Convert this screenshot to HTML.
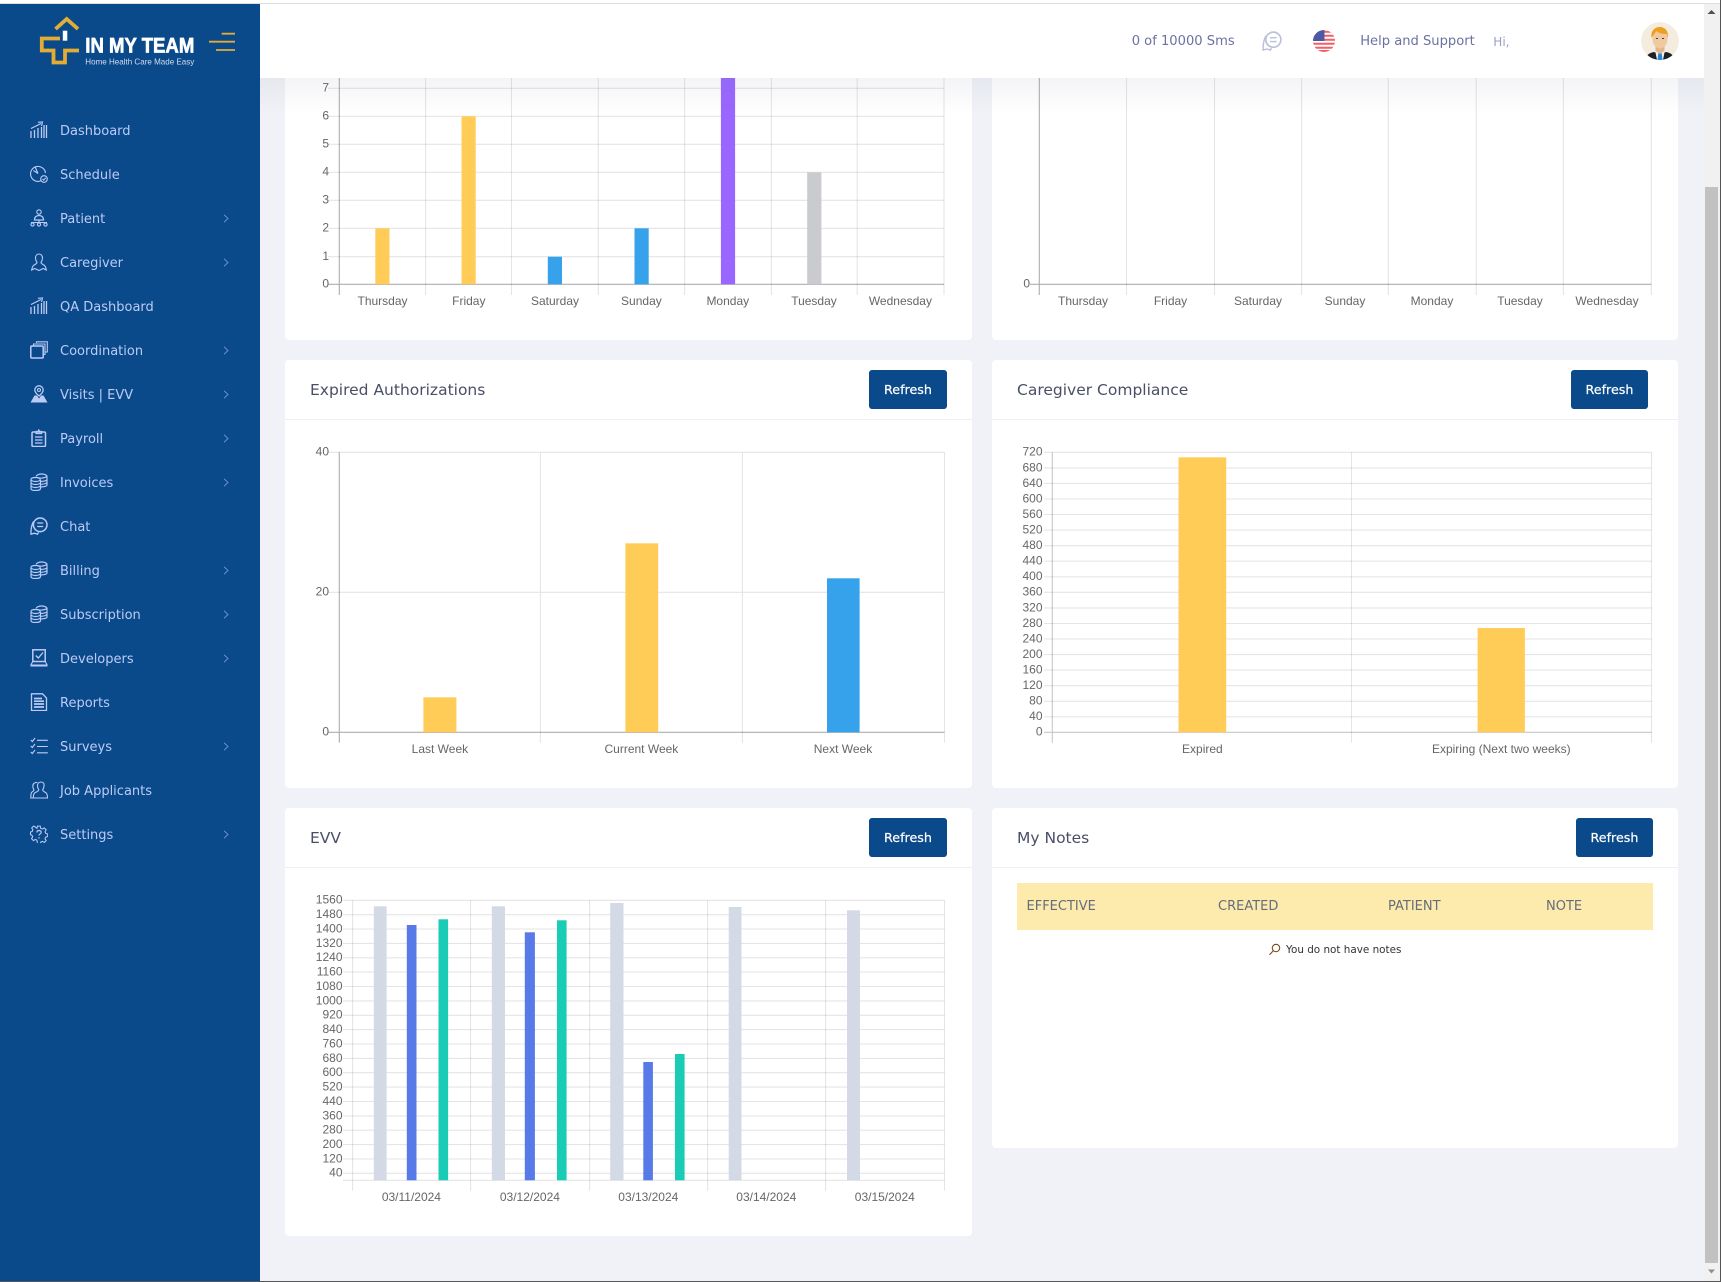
<!DOCTYPE html>
<html lang="en">
<head>
<meta charset="utf-8">
<title>In My Team</title>
<style>
html,body{margin:0;padding:0;width:1721px;height:1282px;overflow:hidden;background:#f0f2f7;font-family:"DejaVu Sans","Liberation Sans",sans-serif}
*{box-sizing:border-box}
.abs{position:absolute}
#top{left:0;top:0;width:1721px;height:4px;background:#fff;border-bottom:1px solid #dedede;z-index:9}
.card{position:absolute;background:#fff;border-radius:4px}
.card .hd{position:absolute;left:0;right:0;top:0;height:60px;border-bottom:1.5px solid #eef0f4}
.card h4{position:absolute;left:25px;top:20px;margin:0;font-size:15.5px;line-height:20px;font-weight:400;color:#4a4f68;white-space:nowrap}
.btn{position:absolute;top:10px;width:78px;height:39px;background:#0a4a8a;color:#fff;border-radius:3px;font-size:12.7px;line-height:39px;text-align:center;-webkit-text-stroke:.2px #fff}
#side{left:0;top:4px;width:260px;height:1277px;background:#0a4a8a;z-index:5}
#menu{position:absolute;left:0;top:104px;margin:0;padding:0;list-style:none;width:260px}
#menu li{position:relative;height:44px;line-height:48px;padding-left:60px;font-size:13px;color:#bccbf6;white-space:nowrap}
#menu li svg.ic{position:absolute;left:30px;top:13px;width:18px;height:18px;fill:none;stroke:#bccbf6;stroke-width:1.1}
#menu li svg.ch{position:absolute;left:223px;top:18px;width:6px;height:9px;fill:none;stroke:#6b8ccb;stroke-width:1}
#head{left:260px;top:4px;width:1444px;height:74px;background:#fff;z-index:4}
#head span{position:absolute;white-space:nowrap;font-size:13.1px;line-height:20px;top:28px;color:#6b72a3}
#fade{left:260px;top:78px;width:1444px;height:36px;background:linear-gradient(rgba(120,125,150,.085),rgba(120,125,150,0));z-index:3}
#bar{left:1704px;top:4px;width:16px;height:1277px;background:#f1f1f1;z-index:6}
#thumb{left:1705px;top:187px;width:13px;height:1076px;background:#c1c1c1;z-index:7}
#thead{position:absolute;left:25px;top:75px;width:636px;height:47px;background:#fdebae;color:#666c7a;font-size:13px;line-height:47px}
#thead span{position:absolute;top:0}
#msg{position:absolute;left:294px;top:135px;font-size:10.4px;line-height:14px;color:#333;white-space:nowrap}
svg text{font-family:"Liberation Sans",Arial,sans-serif;font-size:12px;fill:#666}
</style>
</head>
<body>
<svg width="0" height="0" style="position:absolute">
<defs>
<symbol id="i-dash" viewBox="0 0 18 18"><path d="M1 17V10M4.500 17V9M8 17V7M11.500 17V6M16.500 17V4M14 17V4" stroke-width="1.300"/><path d="M1 7.500L11 2.500M8 1.300L12.500 1 11.500 5"/></symbol>
<symbol id="i-sched" viewBox="0 0 18 18"><path d="M11 15.800A7.500 7.500 0 1 1 15.500 8M8 8.500L5 1.600M3.500 5.500L8 8.500"/><circle cx="14" cy="14" r="3.300"/><path d="M12.500 14l1.200 1.200 2-2.400"/></symbol>
<symbol id="i-patient" viewBox="0 0 18 18"><circle cx="9" cy="3" r="2.200"/><path d="M4.500 11c0-3 2-4.500 4.500-4.500s4.500 1.500 4.500 4.500z" stroke-width="1.300"/><path d="M1 13.500h16M9 11v2.500"/><circle cx="2.500" cy="15.500" r="1.600"/><circle cx="9" cy="15.500" r="1.600"/><circle cx="15.500" cy="15.500" r="1.600"/></symbol>
<symbol id="i-care" viewBox="0 0 18 18"><path d="M9 1C6.800 1 5.500 2.800 5.500 5c0 2 .8 3.500 1.500 4.500 0 1.300-2 1.700-3.500 3C2.500 13.500 2 15 1.700 17l3-1.500 4.300 2 4.300-2 3 1.500c-.3-2-.8-3.500-1.800-4.500-1.500-1.300-3.500-1.700-3.500-3 .7-1 1.500-2.500 1.500-4.500C12.500 2.800 11.200 1 9 1z"/></symbol>
<symbol id="i-coord" viewBox="0 0 18 18"><rect x=".8" y="5" width="12.400" height="12" rx="1" stroke-width="1.500"/><path d="M3.500 5V3h11.500v10.500h-1.800M6.500 2V.8H17.300V11h-2"/></symbol>
<symbol id="i-visits" viewBox="0 0 18 18"><path d="M9 .8a4.200 4.200 0 0 0-4.200 4.200c0 2.500 4.200 6 4.200 6s4.200-3.500 4.200-6A4.200 4.200 0 0 0 9 .8z" stroke-width="1.300"/><circle cx="9" cy="5" r="1.500"/><path d="M4.500 10.500L.5 17.500h17l-4-7-2.500 0L9 13.500 7 10.500z" fill="#bccbf6" stroke="none"/></symbol>
<symbol id="i-pay" viewBox="0 0 18 18"><rect x="2" y="3" width="13.500" height="14.500" rx="1.200" stroke-width="1.500"/><path d="M6 4.500V2.500h2L8.800 1l.8 1.500h2v2zM5 8h7.500M5 11h7.500M5 14h7.500" stroke-width="1.200"/></symbol>
<symbol id="i-coins" viewBox="0 0 18 18"><path d="M1 6.500C1 5 3.500 4.500 5.500 4.500S10 5 10 6.500M1 6.500v9C1 17 3.500 17.500 5.500 17.500s5-.5 5-2V6.500M1 9.500c0 1.300 2.500 2 4.500 2s5-.7 5-2M1 12.500c0 1.300 2.500 2 4.500 2s5-.7 5-2M1 6.500c0 1.300 2.500 2 4.500 2s5-.7 5-2" stroke-width="1.150"/><path d="M6 3.500C6.500 2 9 1 11.500 1S17 2 17 3.500v8.500c0 1.200-3 2-6.500 2M10.500 8.500c3 0 6.500-.7 6.500-2.300M10.500 11.300c3 0 6.500-.7 6.500-2.300M7 4.500c2 .8 7 1 10-1" stroke-width="1.150"/></symbol>
<symbol id="i-chat" viewBox="0 0 18 18"><circle cx="10.200" cy="7.800" r="6.800" stroke-width="1.500"/><path d="M7.200 6h6M7.200 9.500h6" stroke-width="1.200"/><path d="M3.500 4.500C1.800 7.500 .8 12 1 17.200l3.500-1 3 1 1-1.800" stroke-width="1.300"/></symbol>
<symbol id="i-dev" viewBox="0 0 18 18"><rect x="2.800" y=".8" width="12.400" height="11.700" stroke-width="1.500"/><path d="M5.800 6.500L8.300 9 13 3.500" stroke-width="1.300"/><path d="M2.800 12.500L.8 16M15.200 12.500l2 3.500"/><path d="M.5 16.500h17" stroke-width="2"/></symbol>
<symbol id="i-rep" viewBox="0 0 18 18"><path d="M1.500.8H12.500L16.500 5V17.500H1.500z" stroke-width="1.300"/><path d="M4 5.500h8M4 8.200h10M4 11h10M4 14h10" stroke-width="1.700"/></symbol>
<symbol id="i-surv" viewBox="0 0 18 18"><path d="M.8 3l1.500 1.500L5 1M.8 9l1.500 1.500L5 7M.8 15l1.500 1.500L5 13M7 3.300h10.800M7 9.500h10.800M7 15.800h10.800" stroke-width="1.100"/></symbol>
<symbol id="i-job" viewBox="0 0 18 18"><path d="M11 1c-2.200 0-3.500 1.600-3.500 3.800 0 2 .8 3.200 1.300 4 0 1.500-2.500 2-4 3-1 .8-1.500 2.500-1.500 5.200H17.500c0-2.700-.5-4.400-1.500-5.200-1.500-1-3.300-1.500-3.300-3 .5-.8 1.300-2 1.300-4C14.500 2.600 13.200 1 11 1z"/><path d="M7.500 1.500C5 1 2.800 2.800 2.800 5c0 2 .7 3 1.200 4 0 1-1.500 1.500-2.500 2.500C1 12.500.8 14.500.8 17h2.500"/></symbol>
<symbol id="i-set" viewBox="0 0 18 18"><path d="M7.500 1h3l.5 2.300 1.700.8 2-1.200 2 2-1.200 2 .8 1.800 2 .5v2.800l-2 .5-.8 1.700 1.200 2-2 2-2-1.200-1.700.8-.5 1.700h-3L7 15.800l-1.700-.8-2 1.200-2-2 1.200-2-.8-1.700-1.500-.5V7.200l1.700-.5.8-1.800-1.200-2 2-2 2 1.200L7 3.300z" transform="translate(.3 .2) scale(.95)"/><path d="M6.800 7.500C7 6 8 5.500 9 5.500s2.300.7 2.200 2c-.1 1.200-2.200 1.500-2.200 3M9 12.300v1.200" stroke-width="1.200"/></symbol>
<clipPath id="flagclip"><circle cx="1324" cy="41" r="11"/></clipPath>
<clipPath id="avclip"><ellipse cx="1660" cy="41" rx="19" ry="19"/></clipPath>
</defs>
</svg>

<div id="top" class="abs"></div>

<!-- cards -->
<div class="card" style="left:285px;top:40px;width:687px;height:300px"></div>
<div class="card" style="left:992px;top:40px;width:686px;height:300px"></div>
<div class="card" style="left:285px;top:360px;width:687px;height:428px"><div class="hd"></div><h4>Expired Authorizations</h4><div class="btn" style="left:584px">Refresh</div></div>
<div class="card" style="left:992px;top:360px;width:686px;height:428px"><div class="hd"></div><h4>Caregiver Compliance</h4><div class="btn" style="left:579px;width:77px">Refresh</div></div>
<div class="card" style="left:285px;top:808px;width:687px;height:428px"><div class="hd"></div><h4>EVV</h4><div class="btn" style="left:584px">Refresh</div></div>
<div class="card" style="left:992px;top:808px;width:686px;height:340px"><div class="hd"></div><h4>My Notes</h4><div class="btn" style="left:584px;width:77px">Refresh</div>
  <div id="thead"><span style="left:9.500px">EFFECTIVE</span><span style="left:201px">CREATED</span><span style="left:371px">PATIENT</span><span style="left:529px">NOTE</span></div>
  <div id="msg">You do not have notes</div>
  <svg class="abs" style="left:276px;top:135px" width="14" height="13" viewBox="0 0 14 13" fill="none" stroke="#7a4a20" stroke-width="1.100"><circle cx="8" cy="5" r="3.700"/><path d="M5.300 7.800L1.500 11.800"/></svg>
</div>

<!-- charts -->
<svg class="abs" style="left:0;top:0;z-index:2" width="1721" height="1282" viewBox="0 0 1721 1282">
 <g fill="none" stroke="#000" stroke-opacity=".1" stroke-width="1.100">
  <path d="M328 88.300H944M328 116.300H944M328 144.300H944M328 172.300H944M328 200.300H944M328 228.300H944M328 256.700H944"/>
  <path d="M425.600 78V295M511.500 78V295M598.300 78V295M684.600 78V295M771.400 78V295M857.200 78V295M944 78V295"/>
  <path d="M1126.500 78V295M1214.500 78V295M1301.600 78V295M1388.300 78V295M1476.200 78V295M1563.400 78V295M1651.300 78V295"/>
  <path d="M328 452.300H944.500M328 592.300H944.500M540.400 452.300V742.700M742.400 452.300V742.700M944.500 452.300V742.700"/>
  <path d="M1044 452.300H1651.500M1044 467.900H1651.500M1044 483.400H1651.500M1044 499H1651.500M1044 514.500H1651.500M1044 530.100H1651.500M1044 545.700H1651.500M1044 561.200H1651.500M1044 576.800H1651.500M1044 592.300H1651.500M1044 607.900H1651.500M1044 623.500H1651.500M1044 639H1651.500M1044 654.600H1651.500M1044 670.100H1651.500M1044 685.700H1651.500M1044 701.300H1651.500M1044 716.800H1651.500"/>
  <path d="M1351.500 452.300V742.700M1651.500 452.300V742.700"/>
  <path d="M343 900.300H944.500M343 914.700H944.500M343 929H944.500M343 943.400H944.500M343 957.800H944.500M343 972.100H944.500M343 986.500H944.500M343 1000.900H944.500M343 1015.300H944.500M343 1029.600H944.500M343 1044H944.500M343 1058.400H944.500M343 1072.700H944.500M343 1087.100H944.500M343 1101.500H944.500M343 1115.900H944.500M343 1130.200H944.500M343 1144.600H944.500M343 1159H944.500M343 1173.300H944.500M343 1180.300H944.500"/>
  <path d="M470.600 900.300V1190.700M589.600 900.300V1190.700M707.600 900.300V1190.700M825.600 900.300V1190.700M944.500 900.300V1190.700M352.600 900.300V1190.700"/>
 </g>
 <g fill="none" stroke="#000" stroke-opacity=".32" stroke-width="1.100">
  <path d="M339.300 78V295M328 284.300H944"/>
  <path d="M1039.300 78V295M1030 284.300H1651.300"/>
  <path d="M339.300 452.300V742.700M328 732.300H944.500"/>
  <path d="M1052.300 452.300V742.700M1044 732.300H1651.500" stroke-opacity=".22"/>
 </g>
 <!-- bars -->
 <g fill="#ffcc57">
  <rect x="375.300" y="228.300" width="14.200" height="56"/>
  <rect x="461.500" y="116.300" width="14.200" height="168"/>
  <rect x="423.400" y="697.300" width="33" height="35"/>
  <rect x="625.400" y="543.300" width="32.800" height="189"/>
  <rect x="1178.500" y="457.300" width="47.700" height="275"/>
  <rect x="1477.600" y="628" width="47.300" height="104.300"/>
 </g>
 <g fill="#36a2eb">
  <rect x="547.800" y="256.700" width="14.200" height="27.600"/>
  <rect x="634.500" y="228.300" width="14.200" height="56"/>
  <rect x="827" y="578.300" width="32.600" height="154"/>
 </g>
 <rect x="720.900" y="78" width="14.200" height="206.300" fill="#9966ff"/>
 <rect x="807.200" y="172.300" width="14.200" height="112" fill="#c9cbcf"/>
 <g fill="#d3d9e5">
  <rect x="373.800" y="906.300" width="12.800" height="274"/>
  <rect x="491.800" y="906.300" width="13.200" height="274"/>
  <rect x="610.200" y="903" width="13.300" height="277.300"/>
  <rect x="728.700" y="907" width="12.800" height="273.300"/>
  <rect x="847" y="910.300" width="13" height="270"/>
 </g>
 <g fill="#5879e8">
  <rect x="406.800" y="925" width="9.700" height="255.300"/>
  <rect x="524.800" y="932.300" width="10.100" height="248"/>
  <rect x="643.300" y="1062" width="9.600" height="118.300"/>
 </g>
 <g fill="#1acbb5">
  <rect x="438.500" y="919.300" width="9.600" height="261"/>
  <rect x="557" y="920.300" width="9.600" height="260"/>
  <rect x="675" y="1054" width="9.600" height="126.300"/>
 </g>
 <!-- labels -->
 <g text-anchor="end" transform="translate(0 -.8)">
  <text x="329" y="92.500">7</text><text x="329" y="120.500">6</text><text x="329" y="148.500">5</text><text x="329" y="176.500">4</text><text x="329" y="204.500">3</text><text x="329" y="232.500">2</text><text x="329" y="260.900">1</text><text x="329" y="288.500">0</text>
  <text x="1030" y="288.500">0</text>
  <text x="329" y="456.500">40</text><text x="329" y="596.500">20</text><text x="329" y="736.500">0</text>
  <text x="1042.500" y="456.500">720</text><text x="1042.500" y="472.100">680</text><text x="1042.500" y="487.600">640</text><text x="1042.500" y="503.200">600</text><text x="1042.500" y="518.700">560</text><text x="1042.500" y="534.300">520</text><text x="1042.500" y="549.900">480</text><text x="1042.500" y="565.400">440</text><text x="1042.500" y="581">400</text><text x="1042.500" y="596.500">360</text><text x="1042.500" y="612.100">320</text><text x="1042.500" y="627.700">280</text><text x="1042.500" y="643.200">240</text><text x="1042.500" y="658.800">200</text><text x="1042.500" y="674.300">160</text><text x="1042.500" y="689.900">120</text><text x="1042.500" y="705.500">80</text><text x="1042.500" y="721">40</text><text x="1042.500" y="736.500">0</text>
  <text x="342.500" y="904.500">1560</text><text x="342.500" y="918.900">1480</text><text x="342.500" y="933.200">1400</text><text x="342.500" y="947.600">1320</text><text x="342.500" y="962">1240</text><text x="342.500" y="976.300">1160</text><text x="342.500" y="990.700">1080</text><text x="342.500" y="1005.100">1000</text><text x="342.500" y="1019.500">920</text><text x="342.500" y="1033.800">840</text><text x="342.500" y="1048.200">760</text><text x="342.500" y="1062.600">680</text><text x="342.500" y="1076.900">600</text><text x="342.500" y="1091.300">520</text><text x="342.500" y="1105.700">440</text><text x="342.500" y="1120.100">360</text><text x="342.500" y="1134.400">280</text><text x="342.500" y="1148.800">200</text><text x="342.500" y="1163.200">120</text><text x="342.500" y="1177.500">40</text>
 </g>
 <g text-anchor="middle">
  <text x="382.500" y="305">Thursday</text><text x="468.800" y="305">Friday</text><text x="555" y="305">Saturday</text><text x="641.400" y="305">Sunday</text><text x="727.800" y="305">Monday</text><text x="814" y="305">Tuesday</text><text x="900.400" y="305">Wednesday</text>
  <text x="1083" y="305">Thursday</text><text x="1170.500" y="305">Friday</text><text x="1258" y="305">Saturday</text><text x="1345" y="305">Sunday</text><text x="1432" y="305">Monday</text><text x="1520" y="305">Tuesday</text><text x="1607" y="305">Wednesday</text>
  <text x="439.900" y="753">Last Week</text><text x="641.400" y="753">Current Week</text><text x="843" y="753">Next Week</text>
  <text x="1202.400" y="753">Expired</text><text x="1501.300" y="753">Expiring (Next two weeks)</text>
  <text x="411.400" y="1201">03/11/2024</text><text x="529.900" y="1201">03/12/2024</text><text x="648.300" y="1201">03/13/2024</text><text x="766.300" y="1201">03/14/2024</text><text x="884.800" y="1201">03/15/2024</text>
 </g>
</svg>

<div id="fade" class="abs"></div>

<!-- header -->
<div id="head" class="abs">
 <span style="left:871.700px">0 of 10000 Sms</span>
 <span style="left:1100.200px">Help and Support</span>
 <span style="left:1233.300px;color:#9a9fc2;font-size:12px">Hi,</span>
</div>
<svg class="abs" style="left:0;top:0;z-index:4;pointer-events:none" width="1721" height="80" viewBox="0 0 1721 80">
 <g transform="translate(1262 31) scale(1.110)" fill="none" stroke="#bcc0da"><use href="#i-chat" width="18" height="18"/></g>
 <g clip-path="url(#flagclip)">
  <rect x="1313" y="30" width="22" height="22" fill="#fff"/>
  <path d="M1313 31.700h22M1313 35.700h22M1313 39.700h22M1313 43.700h22M1313 47.700h22M1313 51h22" stroke="#f45f63" stroke-width="2"/>
  <rect x="1313" y="30" width="11.500" height="11" fill="#4c5aa6"/>
 </g>
 <g clip-path="url(#avclip)">
  <ellipse cx="1660" cy="41" rx="19" ry="19" fill="#f3ecdf"/>
  <path d="M1646 60c0-5 3-7 8-8l6 2 6-2c5 1 8 3 8 8z" fill="#1f2024"/>
  <path d="M1655 50h10l-2 10h-6z" fill="#f1f1f1"/>
  <path d="M1658.500 52h3l1 8h-5z" fill="#2a86dd"/>
  <path d="M1655.500 46h9v5l-4.500 3-4.500-3z" fill="#e2b588"/>
  <ellipse cx="1660" cy="39" rx="7.500" ry="9.500" fill="#efcaa0"/>
  <path d="M1651.500 38c-1-7 3-11 8-11s9 3 8.500 11l-1.500-4c-3 0-8-.5-10-3-1.500 2-3 4-5 7z" fill="#ee9f1e"/>
  <path d="M1656 38.500h2M1662 38.500h2" stroke="#5a3a20" stroke-width="1"/>
 </g>
</svg>

<!-- sidebar -->
<div id="side" class="abs">
 <svg class="abs" style="left:0;top:-4px" width="260" height="80" viewBox="0 0 260 80">
  <path d="M55.500 29L66.700 19 78 29" fill="none" stroke="#e3ac35" stroke-width="3.800"/>
  <path d="M60 38.500H41.800V50.500H53.500V62.500H65V50.500H79" fill="none" stroke="#e3ac35" stroke-width="3.800"/>
  <rect x="62.800" y="30.700" width="4.500" height="10" fill="#fff"/>
  <text x="85.300" y="52.300" textLength="109" lengthAdjust="spacingAndGlyphs" style="font-size:21.500px;font-weight:700;fill:#fff;stroke:#fff;stroke-width:.7">IN MY TEAM</text>
  <text x="85.300" y="64.500" textLength="109" lengthAdjust="spacingAndGlyphs" style="font-size:8.500px;fill:#d5dcee">Home Health Care Made Easy</text>
  <path d="M221.700 33.700H235M209 41.700H235M216 50H235" stroke="#e3ac35" stroke-width="1.800" fill="none"/>
 </svg>
 <ul id="menu">
  <li><svg class="ic"><use href="#i-dash"/></svg>Dashboard</li>
  <li><svg class="ic"><use href="#i-sched"/></svg>Schedule</li>
  <li><svg class="ic"><use href="#i-patient"/></svg>Patient<svg class="ch" viewBox="0 0 6 9"><path d="M1 .8L5 4.500 1 8.200"/></svg></li>
  <li><svg class="ic"><use href="#i-care"/></svg>Caregiver<svg class="ch" viewBox="0 0 6 9"><path d="M1 .8L5 4.500 1 8.200"/></svg></li>
  <li><svg class="ic"><use href="#i-dash"/></svg>QA Dashboard</li>
  <li><svg class="ic"><use href="#i-coord"/></svg>Coordination<svg class="ch" viewBox="0 0 6 9"><path d="M1 .8L5 4.500 1 8.200"/></svg></li>
  <li><svg class="ic"><use href="#i-visits"/></svg>Visits | EVV<svg class="ch" viewBox="0 0 6 9"><path d="M1 .8L5 4.500 1 8.200"/></svg></li>
  <li><svg class="ic"><use href="#i-pay"/></svg>Payroll<svg class="ch" viewBox="0 0 6 9"><path d="M1 .8L5 4.500 1 8.200"/></svg></li>
  <li><svg class="ic"><use href="#i-coins"/></svg>Invoices<svg class="ch" viewBox="0 0 6 9"><path d="M1 .8L5 4.500 1 8.200"/></svg></li>
  <li><svg class="ic"><use href="#i-chat"/></svg>Chat</li>
  <li><svg class="ic"><use href="#i-coins"/></svg>Billing<svg class="ch" viewBox="0 0 6 9"><path d="M1 .8L5 4.500 1 8.200"/></svg></li>
  <li><svg class="ic"><use href="#i-coins"/></svg>Subscription<svg class="ch" viewBox="0 0 6 9"><path d="M1 .8L5 4.500 1 8.200"/></svg></li>
  <li><svg class="ic"><use href="#i-dev"/></svg>Developers<svg class="ch" viewBox="0 0 6 9"><path d="M1 .8L5 4.500 1 8.200"/></svg></li>
  <li><svg class="ic"><use href="#i-rep"/></svg>Reports</li>
  <li><svg class="ic"><use href="#i-surv"/></svg>Surveys<svg class="ch" viewBox="0 0 6 9"><path d="M1 .8L5 4.500 1 8.200"/></svg></li>
  <li><svg class="ic"><use href="#i-job"/></svg>Job Applicants</li>
  <li><svg class="ic"><use href="#i-set"/></svg>Settings<svg class="ch" viewBox="0 0 6 9"><path d="M1 .8L5 4.500 1 8.200"/></svg></li>
 </ul>
</div>

<!-- scrollbar + window edge -->
<div id="bar" class="abs"></div>
<div id="thumb" class="abs"></div>
<svg class="abs" style="left:1704px;top:4px;z-index:8" width="16" height="1277" viewBox="0 0 16 1277">
 <path d="M7.500 6l4 4h-8z" fill="#505050"/>
 <path d="M4 1265.500h7l-3.500 4z" fill="#8e8e8e"/>
</svg>
<div class="abs" style="left:1720px;top:0;width:1px;height:1282px;background:#555;z-index:9"></div>
<div class="abs" style="left:0;top:1281px;width:1721px;height:1px;background:#555;z-index:9"></div>
</body>
</html>
